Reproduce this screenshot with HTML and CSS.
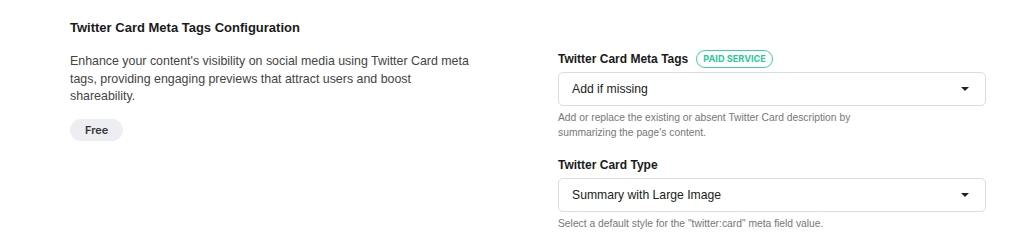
FILE: index.html
```html
<!DOCTYPE html>
<html>
<head>
<meta charset="utf-8">
<link rel="stylesheet" href="styles.css">
</head>
<body>
<div class="section">
  <div class="left">
    <h2 class="title">Twitter Card Meta Tags Configuration</h2>
    <p class="desc">Enhance your content's visibility on social media using Twitter Card meta tags, providing engaging previews that attract users and boost shareability.</p>
    <span class="free">Free</span>
  </div>
  <div class="right">
    <div class="field">
      <div class="label-row"><span class="label">Twitter Card Meta Tags</span><span class="paid">PAID SERVICE</span></div>
      <div class="select"><span>Add if missing</span><span class="caret"></span></div>
      <p class="help">Add or replace the existing or absent Twitter Card description by<br>summarizing the page's content.</p>
    </div>
    <div class="field">
      <div class="label-row"><span class="label">Twitter Card Type</span></div>
      <div class="select"><span>Summary with Large Image</span><span class="caret"></span></div>
      <p class="help">Select a default style for the "twitter:card" meta field value.</p>
    </div>
  </div>
</div>
</body>
</html>
```
FILE: styles.css
```css
* { box-sizing: border-box; }
html, body { margin: 0; padding: 0; background: #fff; }
body { font-family: "Liberation Sans", Arial, sans-serif; color: #1f1f1f; }
.section { display: flex; padding: 20px 38px 0 70px; }
.left { width: 404px; flex: none; }
.right { flex: 1; margin-left: 84px; padding-top: 30px; }
.title { margin: 0; font-size: 13px; font-weight: bold; line-height: 16px; color: #1a1a1a; }
.desc { margin: 17px 0 0; font-size: 12.4px; line-height: 17.5px; color: #444; }
.free { display: inline-block; margin-top: 13px; padding: 0 15px; height: 22px; line-height: 22px; border-radius: 11px; background: #eceef2; font-family: Inter, sans-serif; font-size: 11px; font-weight: 600; color: #333; }
.field { margin-bottom: 16px; }
.field:last-child { margin-bottom: 0; }
.label-row { display: flex; align-items: center; height: 18px; }
.label { font-size: 12px; font-weight: bold; color: #1a1a1a; }
.paid { margin-left: 8px; border: 1px solid #3dd0a8; border-radius: 10px; padding: 0 6px; height: 18px; line-height: 16px; font-family: Inter, sans-serif; font-size: 9.2px; font-weight: 700; color: #2ec79c; }
.select { margin-top: 4px; height: 34px; border: 1px solid #dcdcdc; border-radius: 5px; display: flex; align-items: center; justify-content: space-between; padding: 0 16px 0 13px; font-size: 12.2px; color: #222; }
.caret { width: 0; height: 0; border-left: 4px solid transparent; border-right: 4px solid transparent; border-top: 4px solid #222; }
.help { margin: 4px 0 0; font-size: 10.3px; line-height: 15px; color: #777; }
```
